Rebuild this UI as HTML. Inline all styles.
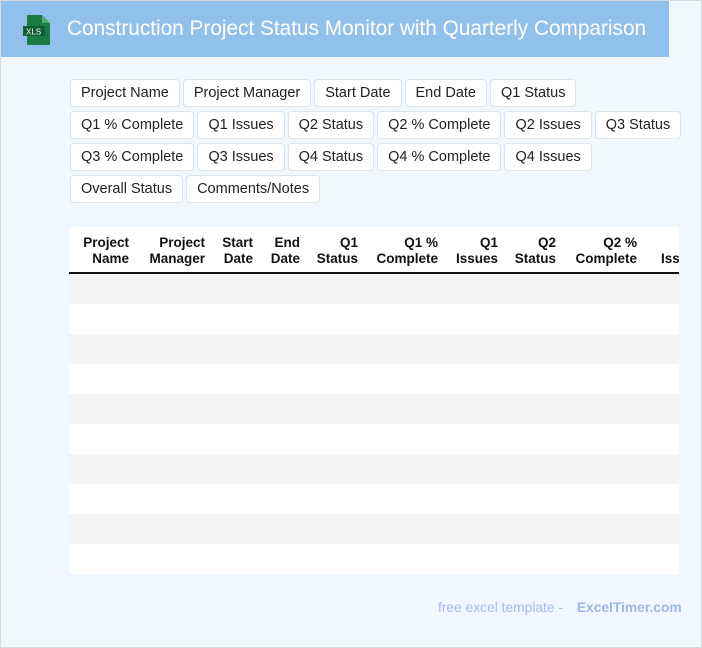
<!DOCTYPE html>
<html><head><style>
body{margin:0;width:702px;height:648px;overflow:hidden;font-family:"Liberation Sans",Arial,sans-serif;}
.page{position:absolute;left:0;top:0;width:700px;height:646px;background:#f0f7ff;border:1px solid #d5dce4;}
.hdr{position:absolute;left:0;top:0;width:668px;height:56px;background:#92c0ec;}
.hdr .t{position:absolute;left:66px;top:16px;color:#fff;font-size:20.8px;}
.chips{position:absolute;left:68px;top:78px;width:620px;}
.row{display:flex;height:28px;margin-bottom:4px;}
.c{height:26px;line-height:26px;border:1px solid #dbe2ea;border-radius:4px;background:#fff;font-size:14.5px;color:#222;padding:0 10px;margin-right:3px;box-sizing:content-box;}
.tbl{position:absolute;left:68px;top:226px;width:610px;height:347px;background:#fff;overflow:hidden;}
.th{position:absolute;top:8px;font-weight:bold;font-size:13.5px;line-height:16px;text-align:right;color:#111;white-space:nowrap;}
.line{position:absolute;left:0;top:45px;width:610px;height:2px;background:#111;}
.r{position:absolute;left:0;width:610px;height:30px;}
.ft{position:absolute;left:437px;top:599px;font-size:13.8px;color:#a8bcee;}
.ft b{margin-left:10px;color:#9fb6ea;}
</style></head><body>
<div class="page">
<div class="hdr">
<svg style="position:absolute;left:21px;top:13px" width="30" height="32" viewBox="0 0 30 32"><path d="M6 1h14l8 8v21a1 1 0 0 1-1 1H6a1 1 0 0 1-1-1V2a1 1 0 0 1 1-1z" fill="#1c7a45"/><path d="M20 1v8h8z" fill="#4caf72"/><rect x="1" y="12" width="22" height="10" fill="#115e33"/><text x="4" y="20.5" font-size="8" fill="#fff" font-family="Liberation Sans">XLS</text></svg>
<div class="t">Construction Project Status Monitor with Quarterly Comparison</div>
</div>
<div class="chips">
<div class="row"><div class="c" style="margin-left:1px">Project Name</div><div class="c">Project Manager</div><div class="c">Start Date</div><div class="c">End Date</div><div class="c">Q1 Status</div></div>
<div class="row"><div class="c" style="margin-left:1px">Q1 % Complete</div><div class="c">Q1 Issues</div><div class="c">Q2 Status</div><div class="c">Q2 % Complete</div><div class="c">Q2 Issues</div><div class="c">Q3 Status</div></div>
<div class="row"><div class="c" style="margin-left:1px">Q3 % Complete</div><div class="c">Q3 Issues</div><div class="c">Q4 Status</div><div class="c">Q4 % Complete</div><div class="c">Q4 Issues</div></div>
<div class="row"><div class="c" style="margin-left:1px">Overall Status</div><div class="c">Comments/Notes</div></div>
</div>
<div class="tbl">
<div class="th" style="right:550px">Project<br>Name</div>
<div class="th" style="right:474px">Project<br>Manager</div>
<div class="th" style="right:426px">Start<br>Date</div>
<div class="th" style="right:379px">End<br>Date</div>
<div class="th" style="right:321px">Q1<br>Status</div>
<div class="th" style="right:241px">Q1 %<br>Complete</div>
<div class="th" style="right:181px">Q1<br>Issues</div>
<div class="th" style="right:123px">Q2<br>Status</div>
<div class="th" style="right:42px">Q2 %<br>Complete</div>
<div class="th" style="left:592px">Q2<br>Issues</div>
<div class="line"></div>
<div class="r" style="top:47px;background:#f4f4f4"></div>
<div class="r" style="top:107px;background:#f4f4f4"></div>
<div class="r" style="top:167px;background:#f4f4f4"></div>
<div class="r" style="top:227px;background:#f4f4f4"></div>
<div class="r" style="top:287px;background:#f4f4f4"></div>
</div>
<div class="ft">free excel template - <b>ExcelTimer.com</b></div>
</div>
</body></html>
